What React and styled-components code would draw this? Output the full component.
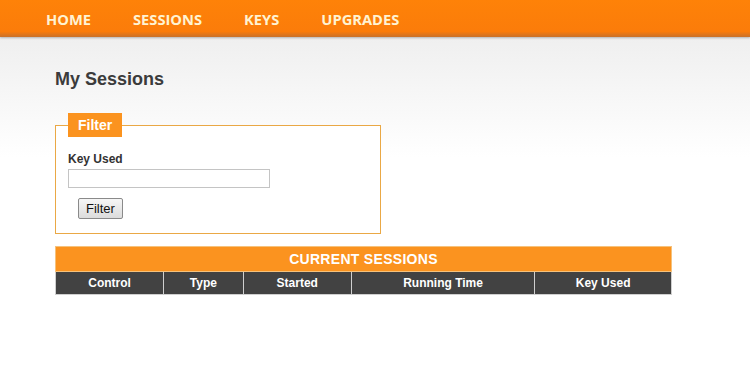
import React from "react";
import styled, { createGlobalStyle } from "styled-components";

const GlobalStyle = createGlobalStyle`
  html, body {
    margin: 0;
    padding: 0;
    background: #fff;
    font-family: "Liberation Sans", Arial, sans-serif;
  }
`;

const NavBar = styled.nav`
  height: 37px;
  display: flex;
  align-items: center;
  padding-left: 25px;
  background: linear-gradient(#fe8208, #fb7c0a 85%, #c9712a);
  box-shadow: 0 1px 2px rgba(0, 0, 0, 0.25);
  position: relative;
  z-index: 1;
`;

const NavLink = styled.a`
  font-family: "Open Sans", "DejaVu Sans", sans-serif;
  font-weight: 700;
  font-size: 14.7px;
  color: #fff3d2;
  padding: 0 21px;
  text-decoration: none;
  cursor: pointer;
`;

const Main = styled.main`
  background: linear-gradient(#efefef, #ffffff 120px);
  padding: 30px 55px 40px;
  min-height: 320px;
  box-sizing: border-box;
`;

const Title = styled.h1`
  margin: 0 0 22px;
  font-size: 18px;
  font-weight: 700;
  color: #3b3b3b;
  line-height: 24px;
`;

const FilterBox = styled.fieldset`
  width: 326px;
  box-sizing: border-box;
  margin: 0;
  border: 1px solid #eaa845;
  padding: 4px 12px 14px;
  background: #fff;
`;

const Legend = styled.legend`
  background: #fb931f;
  color: #fff;
  font-weight: 700;
  font-size: 14px;
  padding: 4px 10px;
  line-height: 16px;
  height: 24px;
  box-sizing: border-box;
`;

const Label = styled.label`
  display: block;
  font-size: 12px;
  font-weight: 700;
  color: #333;
  margin: 11px 0 3px;
`;

const TextInput = styled.input`
  display: block;
  width: 202px;
  height: 19px;
  box-sizing: border-box;
  border: 1px solid #c4c4c4;
  margin: 0;
`;

const Button = styled.button`
  margin: 10px 0 0 10px;
  font-family: "Liberation Sans", Arial, sans-serif;
  font-size: 13px;
  height: 21px;
  padding: 0 7px;
  border: 1px solid #8a8a8a;
  border-radius: 2px;
  background: linear-gradient(#f6f6f6, #dcdcdc);
  color: #111;
`;

const Table = styled.table`
  margin-top: 12px;
  width: 617px;
  border-collapse: collapse;
`;

const Caption = styled.th`
  background: #fb931f;
  color: #fff;
  font-size: 14px;
  font-weight: 700;
  height: 24px;
  padding: 0;
  border: 1px solid #f6c27c;
  letter-spacing: 0.3px;
`;

const HeadCell = styled.th`
  background: #424242;
  color: #fff;
  font-size: 12px;
  font-weight: 700;
  height: 22px;
  padding: 0;
  border: 1px solid #cfcfcf;
  border-top: none;
  width: ${(p) => p.w}px;
`;

const columns = [
  ["Control", 108],
  ["Type", 79],
  ["Started", 108],
  ["Running Time", 184],
  ["Key Used", 137],
];

export default function App() {
  return (
    <>
      <GlobalStyle />
      <NavBar>
        {["HOME", "SESSIONS", "KEYS", "UPGRADES"].map((t) => (
          <NavLink key={t}>{t}</NavLink>
        ))}
      </NavBar>
      <Main>
        <Title>My Sessions</Title>
        <FilterBox>
          <Legend>Filter</Legend>
          <Label>Key Used</Label>
          <TextInput type="text" />
          <Button>Filter</Button>
        </FilterBox>
        <Table>
          <thead>
            <tr>
              <Caption colSpan={5}>CURRENT SESSIONS</Caption>
            </tr>
            <tr>
              {columns.map(([name, w]) => (
                <HeadCell key={name} w={w}>
                  {name}
                </HeadCell>
              ))}
            </tr>
          </thead>
        </Table>
      </Main>
    </>
  );
}
